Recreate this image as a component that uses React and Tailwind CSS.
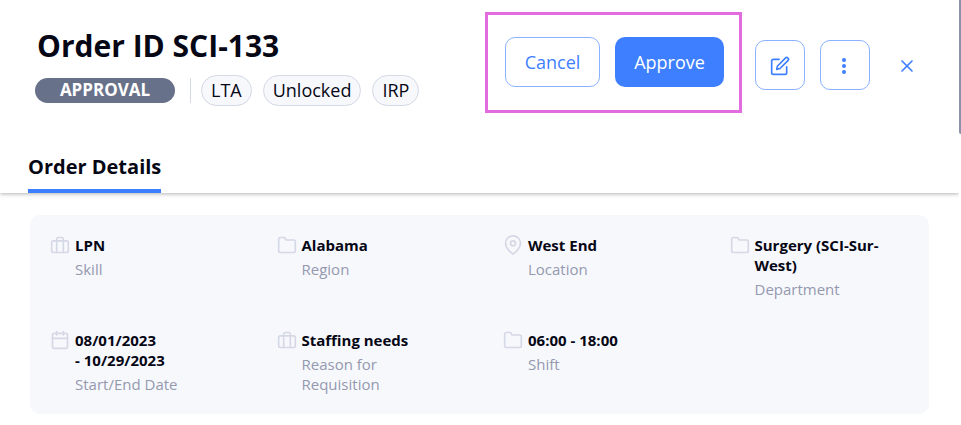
import { FiBriefcase, FiCalendar, FiEdit, FiFolder, FiMapPin, FiX } from 'react-icons/fi';

const tags = ['LTA', 'Unlocked', 'IRP'];

const details = [
  { icon: FiBriefcase, value: ['LPN'], label: 'Skill' },
  { icon: FiFolder, value: ['Alabama'], label: 'Region' },
  { icon: FiMapPin, value: ['West End'], label: 'Location' },
  { icon: FiFolder, value: ['Surgery (SCI-Sur-West)'], label: 'Department' },
  { icon: FiCalendar, value: ['08/01/2023', '- 10/29/2023'], label: 'Start/End Date' },
  { icon: FiBriefcase, value: ['Staffing needs'], label: 'Reason for Requisition' },
  { icon: FiFolder, value: ['06:00 - 18:00'], label: 'Shift' },
];

const DetailItem = ({ icon: Icon, value, label }) => (
  <div className="flex items-start gap-[5px]">
    <Icon className="w-5 h-5 shrink-0 text-[#d5d8e5]" />
    <div className="flex flex-col gap-1 text-[15px] leading-5">
      <dd className="font-bold text-[#060715]">
        {value.map((line) => (
          <span key={line} className="block">{line}</span>
        ))}
      </dd>
      <dt className="order-last text-[#9499af]">{label}</dt>
    </div>
  </div>
);

const IconButton = ({ label, children }) => (
  <button
    type="button"
    aria-label={label}
    className="flex items-center justify-center w-[50px] h-[50px] rounded-[10px] border border-[#8bb2ff] pt-0.5 text-[#3e7fff]"
  >
    {children}
  </button>
);

const App = () => {
  return (
    <div className="relative bg-white font-['Open_Sans',sans-serif] text-[#060715]">
      {/* Header */}
      <header className="flex items-start justify-between pl-[35px] pr-[43px] pt-3">
        <div className="pt-3">
          <h1 className="pl-0.5 text-[30px] leading-11 font-bold">Order ID SCI-133</h1>
          <div className="flex items-center pt-[7px]">
            <span className="w-[140px] rounded-full bg-[#68718a] pb-px text-center text-[17px] leading-6 font-bold text-white">
              APPROVAL
            </span>
            <span className="ml-[15px] mr-2.5 h-[25px] w-px bg-[#d5d8e5]" />
            <ul className="flex gap-[11px]">
              {tags.map((tag) => (
                <li
                  key={tag}
                  className="rounded-full border border-[#d5d8e5] bg-[#f7f8fc] px-[9px] text-lg leading-[29px]"
                >
                  {tag}
                </li>
              ))}
            </ul>
          </div>
        </div>

        <div className="flex items-center">
          <div className="flex gap-[15px] border-3 border-[#e26bdd] pt-[22px] pr-[15px] pb-[23px] pl-[17px] text-lg">
            <button type="button" className="h-[50px] w-[95px] rounded-[10px] border border-[#8bb2ff] text-[#3e7fff]">
              Cancel
            </button>
            <button type="button" className="h-[50px] w-[109px] rounded-[10px] bg-[#3e7fff] font-medium text-white">
              Approve
            </button>
          </div>
          <div className="flex items-center gap-[15px] pl-[13px] pt-[5px]">
            <IconButton label="Edit order">
              <FiEdit className="w-5 h-5" />
            </IconButton>
            <IconButton label="More actions">
              <svg viewBox="0 0 20 20" className="w-5 h-5" fill="currentColor">
                <circle cx="9" cy="4" r="2" />
                <circle cx="9" cy="10" r="2" />
                <circle cx="9" cy="16" r="2" />
              </svg>
            </IconButton>
            <button type="button" aria-label="Close" className="ml-[11px] px-px pt-0.5 text-[#3e7fff]">
              <FiX className="w-5 h-5" />
            </button>
          </div>
        </div>
      </header>

      {/* Tabs */}
      <nav className="mt-7 mr-0.5 flex px-7 shadow-[0_1px_4px_rgba(0,0,0,0.3)] [clip-path:inset(0_0_-8px_0)]">
        <a
          href="#details"
          aria-current="page"
          className="border-b-4 border-[#3e7fff] pt-3 pb-2 text-xl leading-7 font-bold"
        >
          Order Details
        </a>
      </nav>

      <main className="pl-[30px] pr-8 pt-[22px] pb-3">
        <dl className="grid grid-cols-4 gap-x-[47px] gap-y-[31px] rounded-[10px] bg-[#f7f8fc] p-5">
          {details.map((item) => (
            <DetailItem key={item.label} {...item} />
          ))}
        </dl>
      </main>

      {/* Scrollbar thumb */}
      <div className="absolute top-0 right-0 h-[134px] w-0.5 rounded-bl-sm bg-[#8b92a9]" />
    </div>
  );
};

export default App;
